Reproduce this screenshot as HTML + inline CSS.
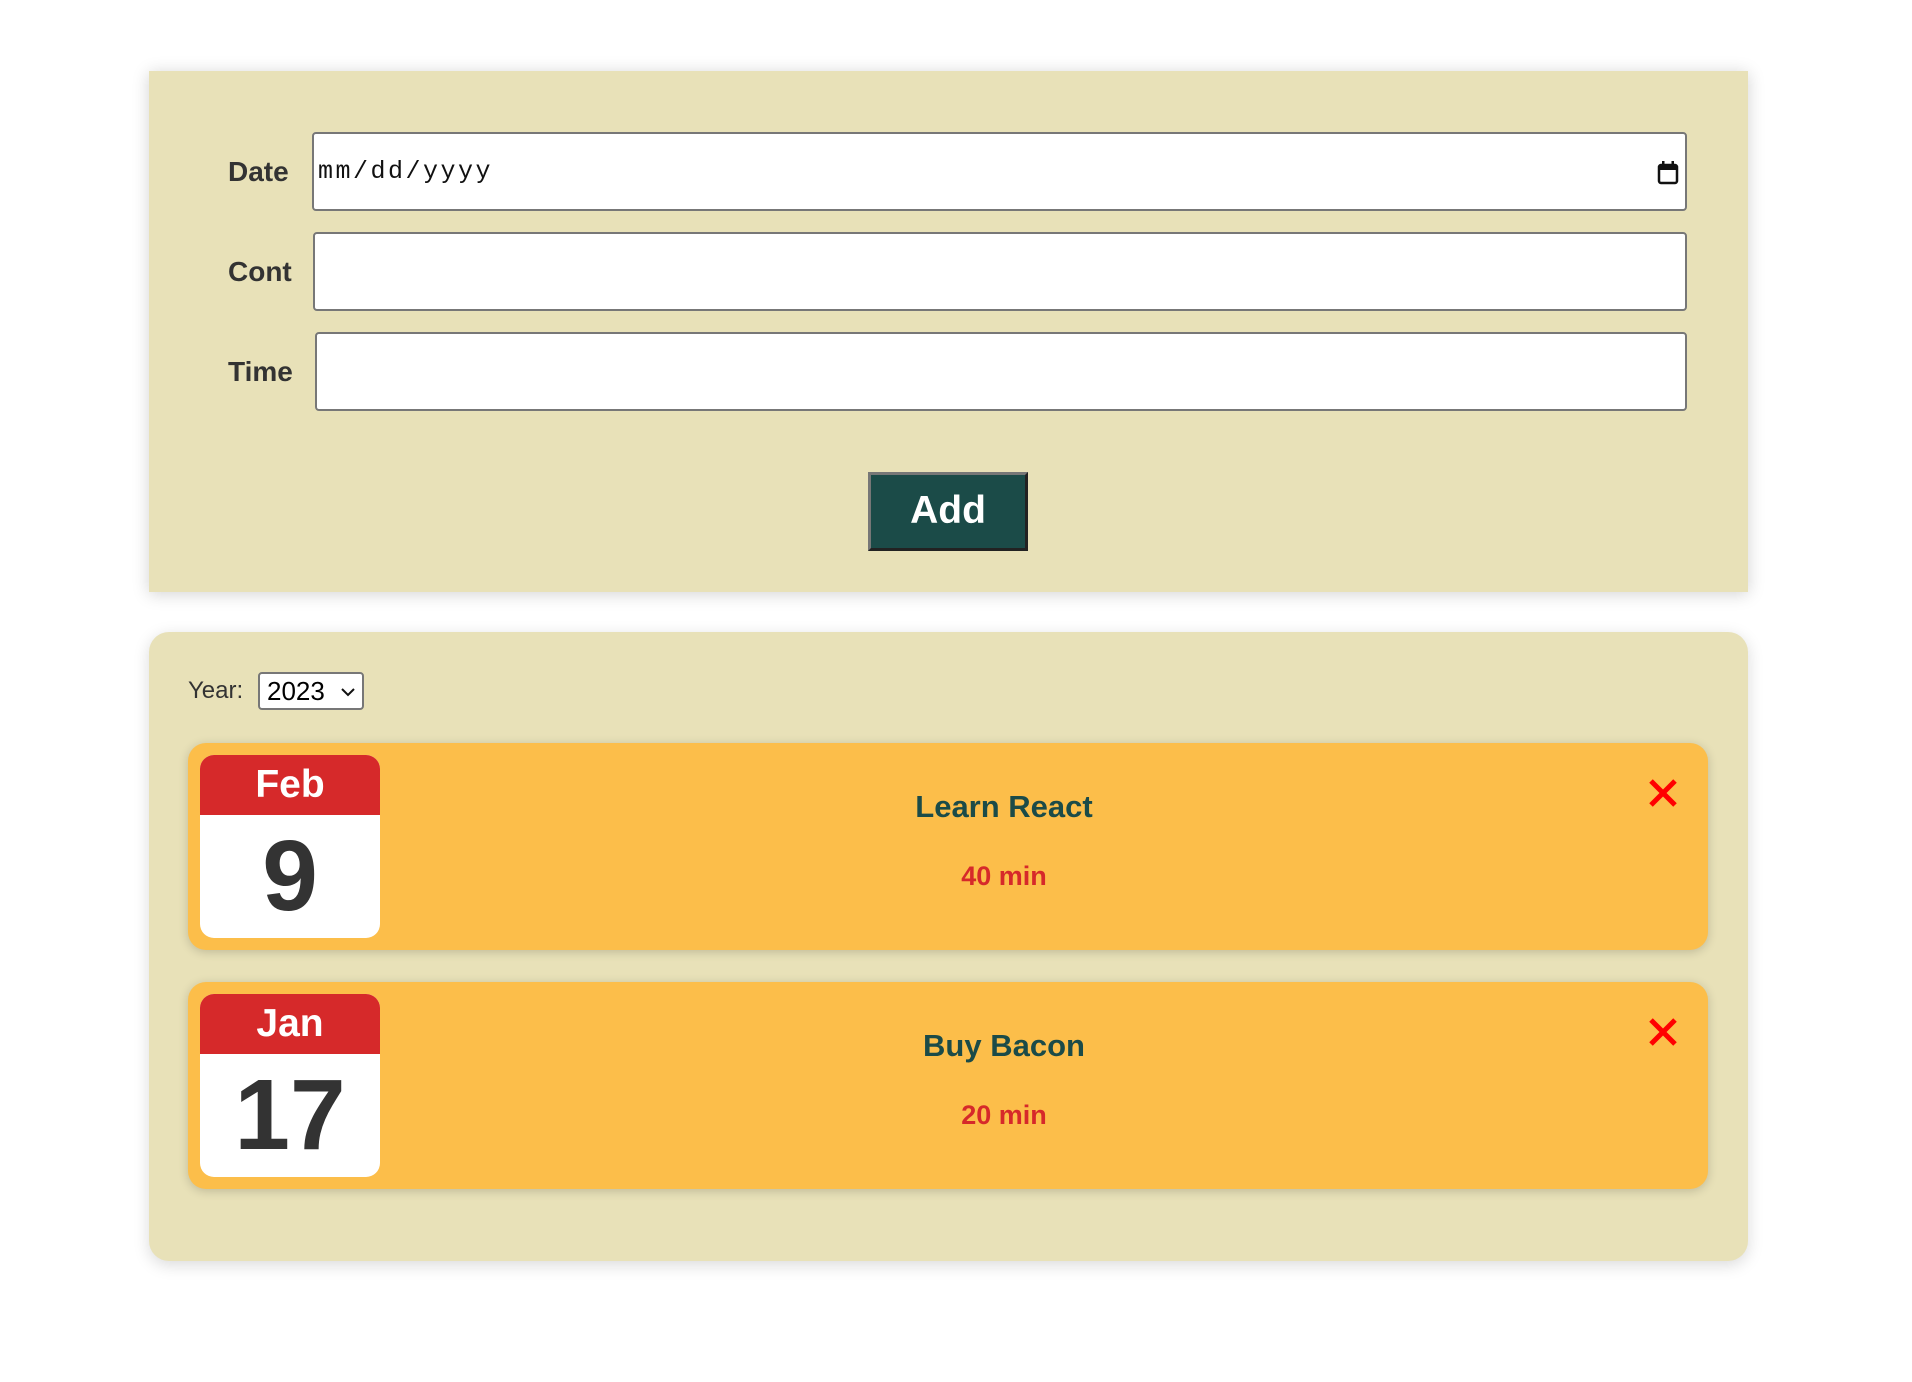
<!DOCTYPE html>
<html><head><meta charset="utf-8"><style>
*{box-sizing:border-box;margin:0;padding:0}
html,body{width:1912px;height:1382px;background:#fff;overflow:hidden;font-family:"Liberation Sans",Arial,sans-serif}
.p1{position:absolute;left:149px;top:71px;width:1599px;height:521px;background:#e8e1b8;box-shadow:0 2px 16px rgba(0,0,0,.18)}
.lbl{position:absolute;left:228px;font-weight:bold;font-size:28px;color:#333;line-height:32px}
.inp{position:absolute;height:79px;background:#fff;border:2px solid #777;border-radius:4px}
.date{font-family:"Liberation Mono",monospace;font-size:25px;letter-spacing:2.5px;color:#111;line-height:75px;padding-left:4px}
.btn{position:absolute;width:160px;height:79px;background:#1b4b48;border:3px solid;border-color:#777 #222 #222 #777;color:#fff;font-weight:bold;font-size:39px;text-align:center;line-height:72px}
.p2{position:absolute;left:149px;top:632px;width:1599px;height:629px;background:#e8e1b8;border-radius:20px;box-shadow:0 4px 16px rgba(0,0,0,.15)}
.year{position:absolute;left:39px;top:40px;font-size:24px;color:#333;line-height:38px}
.sel{position:absolute;left:109px;top:40px;width:106px;height:38px;background:#fff;border:2px solid #777;border-radius:4px;font-size:26px;color:#000;line-height:34px;padding-left:7px}
.card{position:absolute;left:39px;width:1520px;height:207px;background:#fcbe4a;border-radius:18px;box-shadow:0 2px 10px rgba(0,0,0,.18)}
.cal{position:absolute;left:12px;top:12px;width:180px;height:183px;background:#fff;border-radius:14px;overflow:hidden}
.cal .m{height:60px;background:#d6292a;color:#fff;font-weight:bold;font-size:39px;text-align:center;line-height:60px}
.cal .d{color:#333;font-weight:bold;font-size:100px;text-align:center;line-height:123px}
.tt{position:absolute;left:188px;width:1256px;text-align:center;font-weight:bold}
.t1{top:47px;font-size:31px;color:#1b4b48;line-height:34px}
.t2{top:118px;font-size:27px;color:#d6292a;line-height:30px}
.x{position:absolute;left:1460px;top:36px}
</style></head><body>
<div class="p1"></div>
<div class="lbl" style="top:156px">Date</div>
<div class="inp date" style="left:312px;top:132px;width:1375px">mm/dd/yyyy
<svg style="position:absolute;left:1343px;top:26px" width="22" height="26" viewBox="0 0 22 26"><rect x="2" y="5" width="18" height="18" rx="2" fill="none" stroke="#111" stroke-width="2.5"/><rect x="2" y="5" width="18" height="5" fill="#111"/><rect x="5" y="1" width="2.5" height="6" fill="#111"/><rect x="14.5" y="1" width="2.5" height="6" fill="#111"/></svg></div>
<div class="lbl" style="top:256px">Cont</div>
<div class="inp" style="left:313px;top:232px;width:1374px"></div>
<div class="lbl" style="top:356px">Time</div>
<div class="inp" style="left:315px;top:332px;width:1372px"></div>
<div class="btn" style="left:868px;top:472px">Add</div>

<div class="p2">
<div class="year">Year:</div>
<div class="sel">2023<svg style="position:absolute;left:80px;top:13px" width="16" height="10" viewBox="0 0 16 10"><path d="M2 2l6 6 6-6" fill="none" stroke="#111" stroke-width="2"/></svg></div>
<div class="card" style="top:111px">
<div class="cal"><div class="m">Feb</div><div class="d">9</div></div>
<div class="tt t1">Learn React</div><div class="tt t2">40 min</div>
<svg class="x" width="30" height="28" viewBox="0 0 30 28"><path d="M3 2L27 26M27 2L3 26" stroke="#f00" stroke-width="5"/></svg>
</div>
<div class="card" style="top:350px">
<div class="cal"><div class="m">Jan</div><div class="d">17</div></div>
<div class="tt t1">Buy Bacon</div><div class="tt t2">20 min</div>
<svg class="x" width="30" height="28" viewBox="0 0 30 28"><path d="M3 2L27 26M27 2L3 26" stroke="#f00" stroke-width="5"/></svg>
</div>
</div>
</body></html>
